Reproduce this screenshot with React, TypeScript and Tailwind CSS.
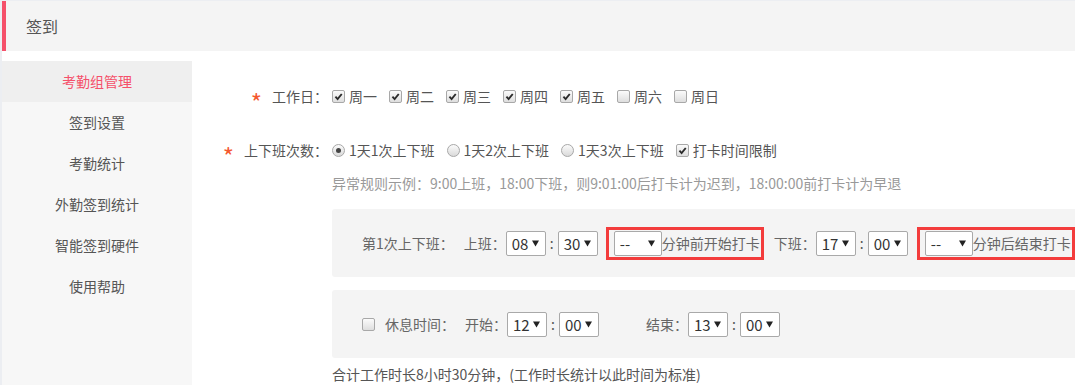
import React from 'react';

const FONT = "font-['Noto_Sans_CJK_SC','Liberation_Sans',sans-serif]";

function Check({ checked = false }: { checked?: boolean }) {
  return (
    <span className="inline-flex h-[13px] w-[13px] shrink-0 items-center justify-center rounded-[2px] border border-[#a8a8a8] bg-linear-to-b from-[#fbfbfb] to-[#dedede]">
      {checked && (
        <svg width="9" height="9" viewBox="0 0 10 10">
          <path d="M1.6 5.2 L4 7.8 L8.6 2.2" fill="none" stroke="#2b2b2b" strokeWidth="2.1" />
        </svg>
      )}
    </span>
  );
}

function Radio({ checked = false }: { checked?: boolean }) {
  return (
    <span className="inline-flex h-[13px] w-[13px] shrink-0 items-center justify-center rounded-full border border-[#a8a8a8] bg-linear-to-b from-[#fbfbfb] to-[#dadada]">
      {checked && <span className="h-[5px] w-[5px] rounded-full bg-[#444]" />}
    </span>
  );
}

function Select({ value, w }: { value: string; w: string }) {
  return (
    <span
      className={`flex h-[25px] shrink-0 items-center justify-between rounded-[2px] border border-[#a9a9a9] bg-white pl-[5px] pr-[6px] text-[15px] leading-none text-[#333] ${w}`}
    >
      <span>{value}</span>
      <svg width="7" height="7" viewBox="0 0 7 7">
        <polygon points="0,0.5 7,0.5 3.5,6.5" fill="#222" />
      </svg>
    </span>
  );
}

function Colon() {
  return <span className="w-[12px] shrink-0 text-center text-[#555]">:</span>;
}

function Required({ label }: { label: string }) {
  return (
    <span className="flex items-center justify-end gap-[10px]">
      <span className="translate-y-[6px] text-[24px] leading-none text-[#f4582f]">*</span>
      <span>{label}</span>
    </span>
  );
}

const days = [
  { label: '周一', on: true },
  { label: '周二', on: true },
  { label: '周三', on: true },
  { label: '周四', on: true },
  { label: '周五', on: true },
  { label: '周六', on: false },
  { label: '周日', on: false },
];

const menu = ['考勤组管理', '签到设置', '考勤统计', '外勤签到统计', '智能签到硬件', '使用帮助'];

export default function App() {
  return (
    <div
      className={`h-screen overflow-hidden bg-[#eceef2] pl-[2px] pt-px text-[14px] [text-spacing-trim:space-all] [font-feature-settings:'chws'_0] ${FONT}`}
    >
      <div className="flex h-full flex-col bg-white">
        {/* Title bar */}
        <div className="flex h-[50px] shrink-0 items-center border-l-4 border-[#f5506a] bg-[#f4f4f4] pl-5 text-[16px] text-[#555]">
          签到
        </div>

        <div className="mt-[10px] flex min-h-0 flex-1">
          {/* Side menu */}
          <aside className="w-[190px] shrink-0 bg-[#f7f7f7]">
            {menu.map((m, i) => (
              <div
                key={m}
                className={`flex h-[41px] items-center justify-center ${
                  i === 0 ? 'bg-[#efefef] text-[#f5506a]' : 'text-[#555]'
                }`}
              >
                {m}
              </div>
            ))}
          </aside>

          {/* Form */}
          <main className="min-w-0 flex-1 pt-[19px] text-[#555]">
            <div className="flex h-[32px] items-center">
              <div className="w-[136px] shrink-0">
                <Required label="工作日：" />
              </div>
              <div className="ml-[4px] flex items-center gap-[12px]">
                {days.map((d) => (
                  <label key={d.label} className="flex items-center gap-[4px]">
                    <Check checked={d.on} />
                    <span>{d.label}</span>
                  </label>
                ))}
              </div>
            </div>

            <div className="mt-[22px] flex h-[32px] items-center">
              <div className="w-[136px] shrink-0">
                <Required label="上下班次数：" />
              </div>
              <div className="ml-[4px] flex items-center gap-[12px]">
                <label className="flex items-center gap-[4px]">
                  <Radio checked />
                  <span>1天1次上下班</span>
                </label>
                <label className="flex items-center gap-[4px]">
                  <Radio />
                  <span>1天2次上下班</span>
                </label>
                <label className="flex items-center gap-[4px]">
                  <Radio />
                  <span>1天3次上下班</span>
                </label>
                <label className="flex items-center gap-[4px]">
                  <Check checked />
                  <span>打卡时间限制</span>
                </label>
              </div>
            </div>

            <div className="ml-[140px] w-[800px]">
              <p className="mt-[7px] h-[20px] leading-[20px] text-[#999]">
                异常规则示例：9:00上班，18:00下班，则9:01:00后打卡计为迟到，18:00:00前打卡计为早退
              </p>

              {/* First shift */}
              <div className="mt-[16px] flex h-[68px] items-center rounded-[3px] bg-[#f4f4f4] pl-[30px] text-[#666]">
                <span>第1次上下班：</span>
                <span className="ml-[10px]">上班：</span>
                <Select value="08" w="w-[40px]" />
                <Colon />
                <Select value="30" w="w-[40px]" />
                <div className="ml-[8px] flex h-[33px] items-center border-[3px] border-[#f33c3c] pl-[5px] pr-[1px]">
                  <Select value="--" w="w-[48px]" />
                  <span>分钟前开始打卡</span>
                </div>
                <span className="ml-[10px]">下班：</span>
                <Select value="17" w="w-[40px]" />
                <Colon />
                <Select value="00" w="w-[40px]" />
                <div className="ml-[9px] flex h-[33px] items-center border-[3px] border-[#f33c3c] pl-[5px] pr-[1px]">
                  <Select value="--" w="w-[48px]" />
                  <span>分钟后结束打卡</span>
                </div>
              </div>

              {/* Break time */}
              <div className="mt-[13px] flex h-[68px] items-center rounded-[3px] bg-[#f4f4f4] pl-[30px] text-[#666]">
                <Check />
                <span className="ml-[10px]">休息时间：</span>
                <span className="ml-[10px]">开始：</span>
                <Select value="12" w="w-[40px]" />
                <Colon />
                <Select value="00" w="w-[40px]" />
                <span className="ml-[47px]">结束：</span>
                <Select value="13" w="w-[40px]" />
                <Colon />
                <Select value="00" w="w-[40px]" />
              </div>

              <p className="mt-[6px] h-[20px] leading-[20px] text-[#555]">
                合计工作时长8小时30分钟，(工作时长统计以此时间为标准)
              </p>
            </div>
          </main>
        </div>
      </div>
    </div>
  );
}
